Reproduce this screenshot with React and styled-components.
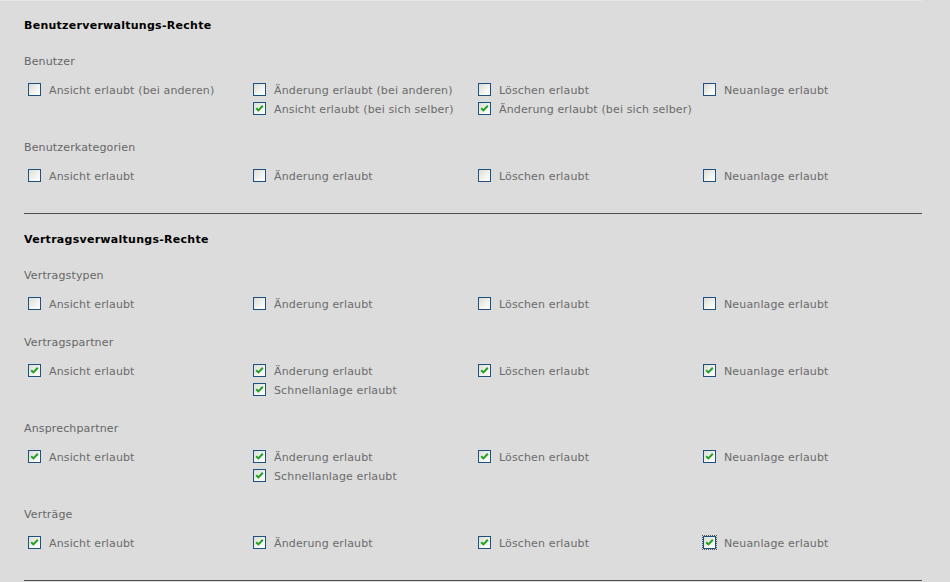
import React from 'react'
import styled, { createGlobalStyle } from 'styled-components'

const GlobalStyle = createGlobalStyle`
    html, body {
        margin: 0;
        padding: 0;
        background: #dcdcdc;
    }
    body {
        font-family: "DejaVu Sans", Verdana, sans-serif;
    }
`

const Page = styled.div`
    width: 898px;
    padding: 15px 0 0 24px;
    min-height: 582px;
    box-sizing: content-box;
    border-top: 1px solid #e6e6e6;
`

const Section = styled.section`
    border-bottom: 1px solid #4f4f4f;
    padding-bottom: 27px;
    margin-bottom: 16px;
`

const Heading = styled.h2`
    margin: 0 0 17px 0;
    font-size: 11px;
    letter-spacing: 0.27px;
    line-height: 19px;
    font-weight: bold;
    color: #000;
`

const Group = styled.div`
    & + & {
        margin-top: 19px;
    }
`

const GroupLabel = styled.div`
    font-size: 11px;
    letter-spacing: 0.15px;
    line-height: 19px;
    color: #666;
    margin-bottom: 10px;
`

const Grid = styled.div`
    display: grid;
    grid-template-columns: repeat(4, 225px);
`

const Cell = styled.div`
    display: flex;
    flex-direction: column;
`

const Item = styled.label`
    display: flex;
    align-items: center;
    height: 19px;
    padding-left: 4px;
    font-size: 11px;
    letter-spacing: 0.14px;
    color: #6b6b6b;
    white-space: nowrap;
`

const Box = styled.span`
    position: relative;
    width: 11px;
    height: 11px;
    margin-right: 8px;
    margin-top: -2px;
    border: 1px solid #1c5180;
    background: linear-gradient(135deg, #dcdcd5 0%, #f4f4f0 60%, #ffffff 100%);
    display: flex;
    align-items: center;
    justify-content: center;
    flex-shrink: 0;
    outline: ${p => (p.$focus ? '1px dotted #555' : 'none')};
    outline-offset: 0;
`

const Check = () => (
    <svg width="9" height="9" viewBox="0 0 9 9">
        <path d="M1.2 4.2 L3.4 6.4 L7.8 1.8" fill="none" stroke="#21a121" strokeWidth="2" />
    </svg>
)

function Checkbox({ label, checked, focus }) {
    return (
        <Item>
            <Box $focus={focus}>{checked && <Check />}</Box>
            {label}
        </Item>
    )
}

const sections = [
    {
        title: 'Benutzerverwaltungs-Rechte',
        groups: [
            {
                name: 'Benutzer',
                cols: [
                    [{ label: 'Ansicht erlaubt (bei anderen)' }],
                    [
                        { label: 'Änderung erlaubt (bei anderen)' },
                        { label: 'Ansicht erlaubt (bei sich selber)', checked: true },
                    ],
                    [
                        { label: 'Löschen erlaubt' },
                        { label: 'Änderung erlaubt (bei sich selber)', checked: true },
                    ],
                    [{ label: 'Neuanlage erlaubt' }],
                ],
            },
            {
                name: 'Benutzerkategorien',
                cols: [
                    [{ label: 'Ansicht erlaubt' }],
                    [{ label: 'Änderung erlaubt' }],
                    [{ label: 'Löschen erlaubt' }],
                    [{ label: 'Neuanlage erlaubt' }],
                ],
            },
        ],
    },
    {
        title: 'Vertragsverwaltungs-Rechte',
        groups: [
            {
                name: 'Vertragstypen',
                cols: [
                    [{ label: 'Ansicht erlaubt' }],
                    [{ label: 'Änderung erlaubt' }],
                    [{ label: 'Löschen erlaubt' }],
                    [{ label: 'Neuanlage erlaubt' }],
                ],
            },
            {
                name: 'Vertragspartner',
                cols: [
                    [{ label: 'Ansicht erlaubt', checked: true }],
                    [
                        { label: 'Änderung erlaubt', checked: true },
                        { label: 'Schnellanlage erlaubt', checked: true },
                    ],
                    [{ label: 'Löschen erlaubt', checked: true }],
                    [{ label: 'Neuanlage erlaubt', checked: true }],
                ],
            },
            {
                name: 'Ansprechpartner',
                cols: [
                    [{ label: 'Ansicht erlaubt', checked: true }],
                    [
                        { label: 'Änderung erlaubt', checked: true },
                        { label: 'Schnellanlage erlaubt', checked: true },
                    ],
                    [{ label: 'Löschen erlaubt', checked: true }],
                    [{ label: 'Neuanlage erlaubt', checked: true }],
                ],
            },
            {
                name: 'Verträge',
                cols: [
                    [{ label: 'Ansicht erlaubt', checked: true }],
                    [{ label: 'Änderung erlaubt', checked: true }],
                    [{ label: 'Löschen erlaubt', checked: true }],
                    [{ label: 'Neuanlage erlaubt', checked: true, focus: true }],
                ],
            },
        ],
    },
]

export default function App() {
    return (
        <>
            <GlobalStyle />
            <Page>
                {sections.map(section => (
                    <Section key={section.title}>
                        <Heading>{section.title}</Heading>
                        {section.groups.map(group => (
                            <Group key={group.name}>
                                <GroupLabel>{group.name}</GroupLabel>
                                <Grid>
                                    {group.cols.map((col, i) => (
                                        <Cell key={i}>
                                            {col.map(item => (
                                                <Checkbox key={item.label} {...item} />
                                            ))}
                                        </Cell>
                                    ))}
                                </Grid>
                            </Group>
                        ))}
                    </Section>
                ))}
            </Page>
        </>
    )
}
